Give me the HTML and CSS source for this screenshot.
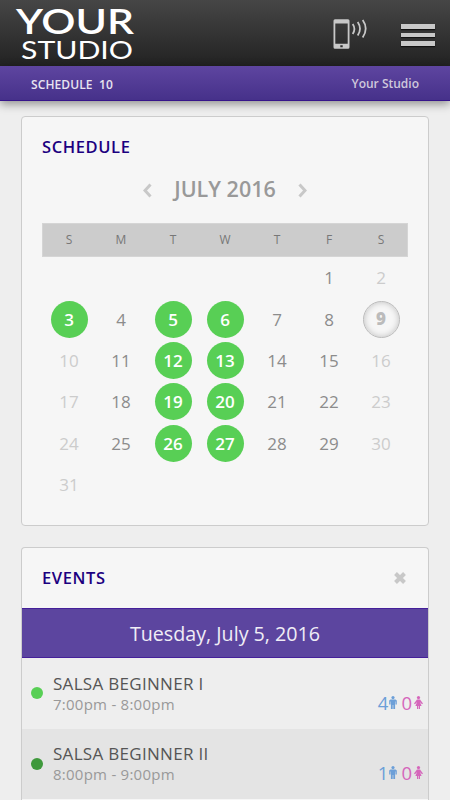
FILE: index.html
```html
<!DOCTYPE html>
<html lang="en">
<head>
  <meta charset="UTF-8">
  <title>Your Studio - Schedule</title>
  <link rel="stylesheet" href="styles.css">
</head>
<body>

  <header class="top-bar">
    <svg class="logo" width="140" height="66" viewBox="0 0 140 66">
      <text class="logo-big" x="16" y="34" textLength="118" lengthAdjust="spacingAndGlyphs">YOUR</text>
      <text class="logo-small" x="21" y="58.5" textLength="112" lengthAdjust="spacingAndGlyphs">STUDIO</text>
    </svg>
    <svg class="phone" width="36" height="32" viewBox="0 0 36 32">
      <path fill="#c8c8c8" fill-rule="evenodd" d="M2 0.300h13a1.500 1.500 0 0 1 1.500 1.500v26.500a1.500 1.500 0 0 1-1.500 1.500h-13a1.500 1.500 0 0 1-1.500-1.500v-26.500a1.500 1.500 0 0 1 1.500-1.500zM2.300 4.500v20.300h12.400v-20.300zM7.300 26.300v2h2.400v-2z"/>
      <path fill="none" stroke="#c8c8c8" stroke-width="1.800" d="M19.700 5q3.400 5 0 10M24.700 3q4.600 6.700 0 13.600M29.700 1q6 8.500 0 17.500"/>
    </svg>
    <div class="menu"><span></span><span></span><span></span></div>
  </header>

  <nav class="sub-bar">
    <span class="page-name">SCHEDULE&nbsp; 10</span>
    <span class="studio-name">Your Studio</span>
  </nav>

  <main>
    <section class="card schedule">
      <h2>SCHEDULE</h2>
      <div class="month">
        <svg width="9" height="15" viewBox="0 0 9 15"><path d="M7.500 1.500l-5.500 6 5.500 6"/></svg>
        <span>JULY 2016</span>
        <svg width="9" height="15" viewBox="0 0 9 15"><path d="M1.500 1.500l5.500 6-5.500 6"/></svg>
      </div>
      <div class="weekdays">
        <span>S</span><span>M</span><span>T</span><span>W</span><span>T</span><span>F</span><span>S</span>
      </div>
      <div class="days">
        <span></span><span></span><span></span><span></span><span></span><span>1</span><span class="off">2</span>
        <span class="on">3</span><span>4</span><span class="on">5</span><span class="on">6</span><span>7</span><span>8</span><span class="today">9</span>
        <span class="off">10</span><span>11</span><span class="on">12</span><span class="on">13</span><span>14</span><span>15</span><span class="off">16</span>
        <span class="off">17</span><span>18</span><span class="on">19</span><span class="on">20</span><span>21</span><span>22</span><span class="off">23</span>
        <span class="off">24</span><span>25</span><span class="on">26</span><span class="on">27</span><span>28</span><span>29</span><span class="off">30</span>
        <span class="off">31</span>
      </div>
    </section>

    <section class="card events">
      <div class="events-head">
        <h2>EVENTS</h2>
        <svg width="12" height="12" viewBox="0 0 12 12"><path d="M1.500 1.500l9 9M10.500 1.500l-9 9"/></svg>
      </div>
      <div class="date">Tuesday, July 5, 2016</div>
      <div class="event">
        <i class="dot"></i>
        <div class="info">
          <div class="title">SALSA BEGINNER I</div>
          <div class="time">7:00pm - 8:00pm</div>
        </div>
        <div class="count">
          <span class="men">4</span>
          <svg class="men" width="8" height="13" viewBox="0 0 8 13"><circle cx="4" cy="1.600" r="1.600"/><path d="M1.500 3.500h5l1.300 1v4h-1.300v-3h-.4v7.500h-1.800v-4h-.6v4h-1.800v-7.500h-.4v3h-1.300v-4z"/></svg>
          <span class="women">0</span>
          <svg class="women" width="9" height="13" viewBox="0 0 9 13"><circle cx="4.500" cy="1.600" r="1.600"/><path d="M3 3.500h3l3 4-1 .8-2-2.300 1.600 4h-1.600v3h-1.200v-3h-.6v3h-1.200v-3h-1.600l1.600-4-2 2.300-1-.8z"/></svg>
        </div>
      </div>
      <div class="event alt">
        <i class="dot"></i>
        <div class="info">
          <div class="title">SALSA BEGINNER II</div>
          <div class="time">8:00pm - 9:00pm</div>
        </div>
        <div class="count">
          <span class="men">1</span>
          <svg class="men" width="8" height="13" viewBox="0 0 8 13"><circle cx="4" cy="1.600" r="1.600"/><path d="M1.500 3.500h5l1.300 1v4h-1.300v-3h-.4v7.500h-1.800v-4h-.6v4h-1.800v-7.500h-.4v3h-1.300v-4z"/></svg>
          <span class="women">0</span>
          <svg class="women" width="9" height="13" viewBox="0 0 9 13"><circle cx="4.500" cy="1.600" r="1.600"/><path d="M3 3.500h3l3 4-1 .8-2-2.300 1.600 4h-1.600v3h-1.200v-3h-.6v3h-1.200v-3h-1.600l1.600-4-2 2.300-1-.8z"/></svg>
        </div>
      </div>
    </section>
  </main>

</body>
</html>
```
FILE: styles.css
```css
* {
  box-sizing: border-box;
}
body {
  margin: 0;
  height: 800px;
  overflow: hidden;
  background-color: #eee;
  font-family: "Open Sans", sans-serif;
}
.top-bar {
  height: 66px;
  display: flex;
  align-items: flex-start;
  background: linear-gradient(#464646, #222);
}
.logo {
  margin-right: 193px;
}
.logo text {
  fill: #fff;
  font-family: Lato, sans-serif;
}
.logo-big {
  font-size: 35px;
  font-weight: 600;
}
.logo-small {
  font-size: 25px;
}
.phone {
  margin-top: 19px;
}
.menu {
  display: flex;
  flex-direction: column;
  gap: 4px;
  margin: 24px 0 0 32px;
}
.menu span {
  width: 34px;
  height: 4.5px;
  background-color: #c8c8c8;
  box-shadow: 0 1px 1px #111;
}
.sub-bar {
  height: 35px;
  padding: 0 31px 0 31px;
  display: flex;
  justify-content: space-between;
  align-items: center;
  background: linear-gradient(#5e45a0, #46318a);
  border-bottom: 1px solid #36148a;
  box-shadow: 0 3px 9px rgba(0,0,0,0.4);
  font-size: 12px;
  font-weight: 600;
}
.page-name {
  color: #e8e4f0;
  padding-top: 2px;
  letter-spacing: 0.1px;
}
.studio-name {
  color: #cfc8dc;
}
main {
  padding: 15px 21px 0;
}
.card {
  background-color: #f6f6f6;
  border: 1px solid #ccc;
  border-radius: 4px;
}
h2 {
  margin: 0;
  color: #1c0080;
  font-size: 16.5px;
  line-height: 22px;
  font-weight: 600;
  letter-spacing: 0.6px;
}
.schedule {
  height: 410px;
  padding: 19px 20px 0;
}
.month {
  height: 30px;
  margin-top: 16px;
  display: flex;
  justify-content: center;
  align-items: center;
  gap: 22px;
  color: #999;
  font-size: 21.5px;
  font-weight: 600;
}
.month span {
  position: relative;
  top: -1px;
}
.month svg {
  fill: none;
  stroke: #c8c8c8;
  stroke-width: 3;
  margin-top: 2px;
}
.weekdays, .days {
  display: grid;
  grid-template-columns: repeat(7, 52px);
  justify-content: center;
  justify-items: center;
}
.weekdays {
  margin-top: 19px;
  height: 34px;
  background-color: #ccc;
  border: 1px solid #d5d5d5;
  color: #777;
  font-size: 12px;
}
.weekdays span {
  line-height: 32px;
}
.days {
  grid-auto-rows: 41.4px;
  align-items: center;
  color: #8c8c8c;
  font-size: 17px;
}
.days span {
  width: 37px;
  height: 37px;
  line-height: 37px;
  text-align: center;
  border-radius: 50%;
}
.days .off {
  color: #ccc;
}
.days .on {
  background-color: #58cf55;
  color: #fff;
  font-weight: 600;
}
.days .today {
  color: #bbb;
  font-weight: 800;
  line-height: 34px;
  border: 1.5px solid #bbb;
  box-shadow: inset 0 0 6px rgba(0,0,0,0.22);
}
.events {
  margin-top: 21px;
  height: 253px;
  border-bottom: none;
  border-radius: 4px 4px 0 0;
}
.events-head {
  height: 60px;
  padding: 0 22px 0 20px;
  display: flex;
  justify-content: space-between;
  align-items: center;
}
.events-head svg {
  stroke: #c8c8c8;
  stroke-width: 4;
}
.date {
  height: 50px;
  line-height: 49px;
  background-color: #5c459f;
  border: solid #45209a;
  border-width: 1px 0;
  color: #f0edf6;
  text-align: center;
  font-size: 19.7px;
}
.event {
  height: 70.5px;
  padding: 0 5px 0 9px;
  display: flex;
  align-items: center;
  background-color: #eee;
}
.event.alt {
  background-color: #e4e4e4;
}
.dot {
  width: 12px;
  height: 12px;
  margin-right: 10px;
  border-radius: 50%;
  background-color: #58cf55;
}
.alt .dot {
  background-color: #3f993c;
}
.info {
  flex: 1;
}
.title {
  color: #555;
  font-size: 17px;
  line-height: 21px;
  letter-spacing: 0.3px;
}
.time {
  color: #999;
  font-size: 15px;
  line-height: 20px;
  letter-spacing: 0.25px;
}
.count {
  display: flex;
  align-items: center;
  margin-top: 18px;
  font-size: 18.5px;
}
.count .women {
  color: #d566bb;
  fill: #d566bb;
}
.count .men {
  color: #6c9fd8;
  fill: #6c9fd8;
}
.count svg.men {
  margin: 0 4px 0 1px;
}
.count svg.women {
  margin-left: 2px;
}
```
